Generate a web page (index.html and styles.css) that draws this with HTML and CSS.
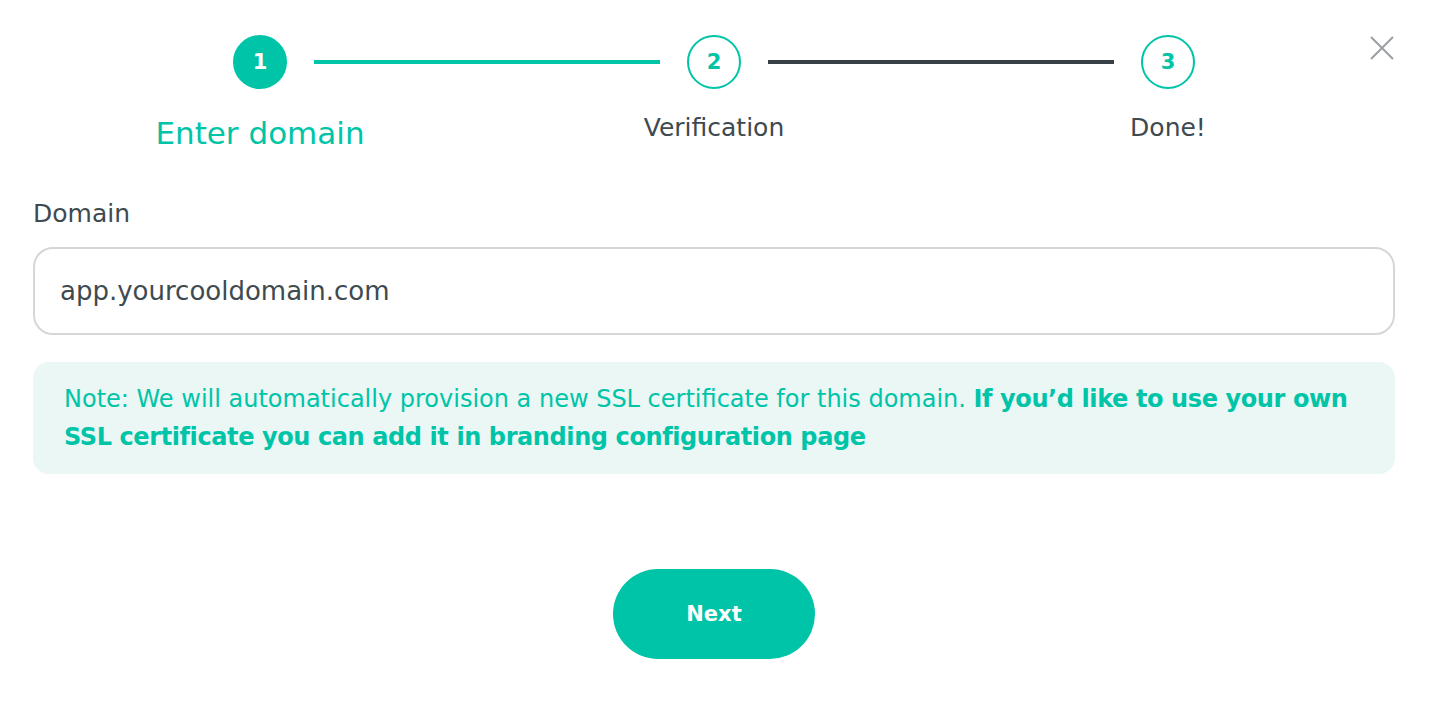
FILE: index.html
```html
<!DOCTYPE html>
<html>
<head>
<meta charset="utf-8">
<link rel="stylesheet" href="styles.css">
</head>
<body>
<div class="modal">
  <button class="close" aria-label="Close">
    <svg width="26" height="26" viewBox="0 0 26 26"><path d="M2 2L24 24M24 2L2 24" stroke="#9aa0a3" stroke-width="2" fill="none"/></svg>
  </button>
  <div class="stepper">
    <div class="circle active">1</div>
    <div class="line done"></div>
    <div class="circle">2</div>
    <div class="line"></div>
    <div class="circle">3</div>
  </div>
  <div class="labels">
    <div class="label active">Enter domain</div>
    <div class="label">Verification</div>
    <div class="label">Done!</div>
  </div>
  <div class="field-label">Domain</div>
  <div class="input">app.yourcooldomain.com</div>
  <div class="note">Note: We will automatically provision a new SSL certificate for this domain. <b>If you’d like to use your own SSL certificate you can add it in branding configuration page</b></div>
  <div class="actions">
    <button class="next">Next</button>
  </div>
</div>
</body>
</html>
```
FILE: styles.css
```css
html, body { margin: 0; padding: 0; background: #fff; }
body { font-family: "DejaVu Sans", "Open Sans", sans-serif; color: #3e4a50; }
.modal { position: relative; padding: 35px 35px 0 33px; }
.close { position: absolute; top: 35px; right: 35px; background: none; border: 0; padding: 0; cursor: pointer; }
.stepper { display: flex; align-items: center; padding: 0 200px; }
.circle { width: 50px; height: 50px; border: 2px solid #00c4a7; border-radius: 50%; display: flex; align-items: center; justify-content: center; color: #00c4a7; font-size: 21px; font-weight: 700; flex: none; }
.circle.active { background: #00c4a7; color: #fff; }
.line { flex: 1; height: 4px; background: #373f47; margin: 0 27px; }
.line.done { background: #00c4a7; }
.labels { display: grid; grid-template-columns: 1fr 1fr 1fr; margin-top: 26px; align-items: start; }
.label { text-align: center; font-size: 25px; line-height: 26px; color: #3e4a50; }
.label.active { color: #00c4a7; font-size: 31px; line-height: 36px; }
.field-label { font-size: 25px; line-height: 30px; margin-top: 48px; }
.input { margin-top: 18px; height: 84px; border: 2px solid #d4d7d9; border-radius: 20px; display: flex; align-items: center; padding-left: 25px; font-size: 26px; color: #3e4a50; }
.note { margin-top: 27px; background: #eaf7f5; border-radius: 16px; padding: 18px 26px 18px 31px; color: #00c4a7; font-size: 24px; line-height: 38px; }
.note b { font-weight: 700; letter-spacing: -0.4px; }
.actions { display: flex; justify-content: center; margin-top: 95px; }
.next { width: 202px; height: 90px; border-radius: 45px; border: 0; background: #00c4a7; color: #fff; font-family: inherit; font-size: 21px; font-weight: 700; }
```
